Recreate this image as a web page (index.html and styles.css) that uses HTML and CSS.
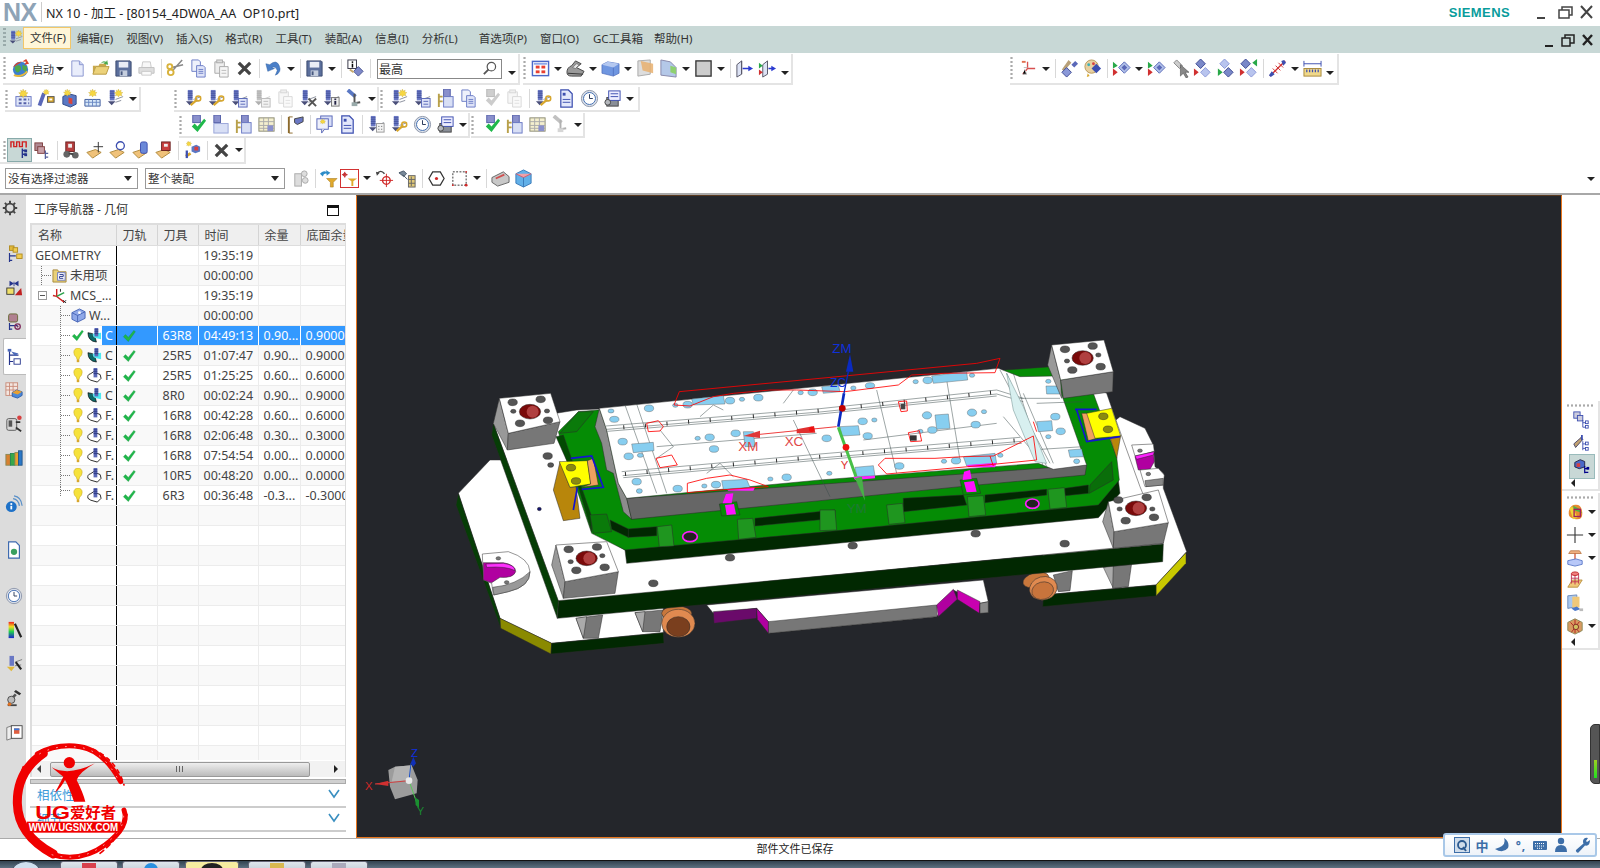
FILE: index.html
```html
<!DOCTYPE html>
<html lang="zh">
<head>
<meta charset="utf-8">
<title>NX 10 - 加工</title>
<link rel="stylesheet" href="styles.css">
</head>
<body>
<svg class="defs" width="0" height="0">
<symbol id="glo" viewBox="0 0 20 20"><circle cx="10" cy="11" r="8" fill="#3d7fd0"/><path d="M4 8q4-3 6 0t-2 6q-4 1-4-6zM12 6l5 2-1 6-4-3z" fill="#4fa84a"/><path d="M2 9Q6 1 16 3l-2 3 5-1-3-5z" fill="#d8452c"/><path d="M3 17q8 3 14-4" fill="none" stroke="#e6b93c" stroke-width="2"/></symbol>
<symbol id="doc" viewBox="0 0 20 20"><path d="M4 2h8l4 4v12H4z" fill="#e9edfb" stroke="#8a96d0"/><path d="M12 2v4h4" fill="#c9d1f0" stroke="#8a96d0"/></symbol>
<symbol id="fld" viewBox="0 0 20 20"><path d="M2 7h6l1-2h7v3H5L2 16z" fill="#c9a94a"/><path d="M2 16l3-8h14l-3 8z" fill="#ecd27a" stroke="#b99b42"/><path d="M10 5q2-4 6-2l1-2 1 5-5-1 2-1q-3-1-5 1z" fill="#4aa84a"/></symbol>
<symbol id="flp" viewBox="0 0 20 20"><path d="M2 2h15l1 1v15H2z" fill="#5b6f9c" stroke="#3d4c70"/><rect x="5" y="3" width="10" height="6" fill="#e8ecf5"/><rect x="6" y="12" width="8" height="6" fill="#c5cede"/><rect x="7" y="13" width="2" height="4" fill="#47587f"/></symbol>
<symbol id="prn" viewBox="0 0 20 20"><path d="M6 3h8l1 6H5z" fill="#eee" stroke="#888"/><path d="M2 9h16v6H2z" fill="#b4b8bd" stroke="#777"/><path d="M5 13h10v4H5z" fill="#f4f4f4" stroke="#888"/></symbol>
<symbol id="sci" viewBox="0 0 20 20"><path d="M17 1L7 12M18 6L6 9" stroke="#888" stroke-width="1.6"/><circle cx="5" cy="14" r="3" fill="none" stroke="#d8b23c" stroke-width="2"/><circle cx="4" cy="8" r="2.6" fill="none" stroke="#d8b23c" stroke-width="2"/></symbol>
<symbol id="cpy" viewBox="0 0 20 20"><path d="M3 1h7l2 2v10H3z" fill="#eef1fb" stroke="#6b7cc6"/><path d="M8 7h7l2 2v10H8z" fill="#dfe4f8" stroke="#6b7cc6"/><path d="M10 11h5M10 13h5M10 15h5" stroke="#6b7cc6"/></symbol>
<symbol id="pst" viewBox="0 0 20 20"><path d="M3 3h10v12H3z" fill="#eee" stroke="#aaa"/><rect x="5" y="1" width="6" height="3" fill="#ddd" stroke="#aaa"/><path d="M8 8h9v11H8z" fill="#f6f6f6" stroke="#aaa"/><path d="M10 12h5M10 15h5" stroke="#bbb"/></symbol>
<symbol id="del" viewBox="0 0 20 20"><path d="M4 4l12 12M16 4L4 16" stroke="#444" stroke-width="3.4"/></symbol>
<symbol id="und" viewBox="0 0 20 20"><path d="M2 5l2 8 7-3-3-1q4-2 6 3l-2 5q7-3 4-10T6 6z" fill="#4a7fc8" stroke="#2c5da0" stroke-width=".5"/></symbol>
<symbol id="inf" viewBox="0 0 20 20"><rect x="2" y="1" width="9" height="9" fill="#fff" stroke="#334"/><rect x="6" y="2.5" width="1.6" height="1.6"/><rect x="6" y="5" width="1.6" height="4"/><path d="M13 8l5 5-5 5-5-5z" fill="#7e88c8" stroke="#4a5590"/><path d="M4 11l4 3" stroke="#c6a86a" stroke-width="2"/></symbol>
<symbol id="bs" viewBox="0 0 20 20"><rect x="4" y="1" width="5" height="11" fill="#6a78c4"/><path d="M4 3h5M4 5h5M4 7h5M4 9h5" stroke="#3d4a94" stroke-width=".8"/><path d="M10 11l8-3M10 14l6-2" stroke="#8a8f9c"/><path d="M2 13h8l-4 4z" fill="#4a4f7a"/></symbol>
<symbol id="mk" viewBox="0 0 20 20"><use href="#bs"/><path d="M7 17l7-6" stroke="#d8a72c" stroke-width="2.4"/><circle cx="15" cy="10" r="2.6" fill="none" stroke="#d8a72c" stroke-width="1.6"/></symbol>
<symbol id="mc" viewBox="0 0 20 20"><use href="#bs"/><rect x="9" y="10" width="9" height="9" fill="#dfe4f8" stroke="#5a68b8"/><path d="M11 13h5M11 16h5" stroke="#5a68b8"/></symbol>
<symbol id="mx" viewBox="0 0 20 20"><use href="#bs"/><path d="M10 10l8 8M18 10l-8 8" stroke="#555" stroke-width="2"/></symbol>
<symbol id="mi" viewBox="0 0 20 20"><use href="#bs"/><rect x="10" y="9" width="8" height="9" fill="#eee" stroke="#777"/><rect x="13" y="10" width="2" height="1.5" fill="#224"/><rect x="13" y="12.5" width="2" height="4" fill="#224"/></symbol>
<symbol id="mt" viewBox="0 0 20 20"><path d="M3 1l8 7" stroke="#5a78c4" stroke-width="4"/><path d="M10 5v10l6-1" stroke="#555" stroke-width="2" fill="none"/><rect x="7" y="14" width="6" height="4" fill="#9aa"/></symbol>
<symbol id="sta" viewBox="0 0 20 20"><path d="M10 0l1.6 3.6L15 2l-1 3.6 4 .6-3 2.6 1.4 3.2-4-1L10 14l-1.6-3-4 1L6 8.800 3 6.200l4-.6L6 2l3.400 1.600z" fill="#f6d743" stroke="#b99b22" stroke-width=".5"/></symbol>
<symbol id="p1" viewBox="0 0 20 20"><rect x="2" y="8" width="16" height="10" fill="#dfe6f8" stroke="#6a78c4"/><path d="M5 11h3M10 11h3M15 11h1M5 15h3M10 15h3M15 15h1" stroke="#5560a8" stroke-width="2"/><use href="#sta" x="3" y="0" width="13" height="13"/></symbol>
<symbol id="p2" viewBox="0 0 20 20"><rect x="3" y="4" width="4" height="14" fill="#5a68b8" transform="rotate(20 5 11)"/><rect x="11" y="8" width="7" height="6" fill="#d8a72c" stroke="#555"/><rect x="13" y="10" width="3" height="2" fill="#fff"/><use href="#sta" x="5" y="0" width="9" height="9"/></symbol>
<symbol id="p3" viewBox="0 0 20 20"><path d="M3 8l6-3 8 2v9l-6 3-8-3z" fill="#5a78c4" stroke="#334c8c"/><path d="M9 9l4 1v6l-4-1z" fill="#d8453c"/><use href="#sta" x="2" y="0" width="11" height="11"/></symbol>
<symbol id="p4" viewBox="0 0 20 20"><path d="M2 11h16v7H2z" fill="#d8e8f8" stroke="#3d5a9c"/><path d="M2 14h16M6 11v7M10 11v7M14 11v7" stroke="#6a88c4"/><use href="#sta" x="4" y="0" width="12" height="12"/></symbol>
<symbol id="p5" viewBox="0 0 20 20"><use href="#bs"/><use href="#sta" x="7" y="0" width="12" height="12"/></symbol>
<symbol id="tck" viewBox="0 0 20 20"><path d="M2 11l3-3 4 4 8-10 2 2-10 14z" fill="#1fb84a" stroke="#0d8a30" stroke-width=".5"/></symbol>
<symbol id="ck" viewBox="0 0 20 20"><rect x="5" y="0" width="8" height="8" fill="#8a90cc" stroke="#5560a8"/><path d="M4 12l3-3 3 3 7-8 2 2-9 12z" fill="#1fb84a"/></symbol>
<symbol id="c2" viewBox="0 0 20 20"><rect x="3" y="0" width="7" height="8" fill="#8a90cc" stroke="#5560a8"/><rect x="3" y="9" width="15" height="10" fill="#d8dff5" stroke="#98a4d8"/></symbol>
<symbol id="c3" viewBox="0 0 20 20"><rect x="8" y="0" width="7" height="8" fill="#8a90cc" stroke="#5560a8"/><rect x="8" y="8" width="10" height="11" fill="#d8dff5" stroke="#6a78c4"/><path d="M3 5v14M3 8h4M3 13h4" stroke="#b8a04a" stroke-width="2"/></symbol>
<symbol id="tb" viewBox="0 0 20 20"><rect x="2" y="3" width="16" height="14" fill="#f4efcf" stroke="#8a8a70"/><path d="M2 7h16M2 11h16M2 14h16M7 3v14M12 3v14" stroke="#aaa"/><rect x="11" y="11" width="6" height="6" fill="#8a90cc"/></symbol>
<symbol id="flg" viewBox="0 0 20 20"><path d="M3 2v17" stroke="#8c6a2c" stroke-width="2"/><path d="M3 2h4M3 19h4" stroke="#8c6a2c"/><path d="M9 4l9-2v5l-6 3-3-2z" fill="#6a78c4" stroke="#444"/></symbol>
<symbol id="nte" viewBox="0 0 20 20"><rect x="6" y="1" width="12" height="11" fill="#d8def8" stroke="#5a68b8"/><rect x="2" y="4" width="12" height="11" fill="#eef0fb" stroke="#5a68b8"/><use href="#sta" x="4" y="4" width="8" height="8"/><path d="M7 15v4l3-4" fill="#eee" stroke="#5a68b8"/></symbol>
<symbol id="bdc" viewBox="0 0 20 20"><path d="M4 1h8l4 4v14H4z" fill="#e3e8fb" stroke="#3d4fb0" stroke-width="1.300"/><rect x="6" y="4" width="3" height="3" fill="#3d4fb0"/><path d="M6 11h8M6 14h8" stroke="#3d4fb0"/></symbol>
<symbol id="ml" viewBox="0 0 20 20"><use href="#bs"/><rect x="10" y="9" width="8" height="9" fill="#f3f3f3" stroke="#999"/><path d="M12 12h1M15 12h1M12 15h1M15 15h1" stroke="#555"/></symbol>
<symbol id="clk" viewBox="0 0 20 20"><circle cx="10" cy="10" r="8.500" fill="#dfe4ec" stroke="#8a93a8"/><circle cx="10" cy="10" r="6.300" fill="#fff" stroke="#3d6ab0"/><path d="M10 5.500V10h3.500" stroke="#235" fill="none"/></symbol>
<symbol id="mc2" viewBox="0 0 20 20"><rect x="4" y="9" width="12" height="9" fill="#8a8f98" stroke="#444"/><rect x="6" y="2" width="12" height="10" fill="#eef" stroke="#3d4fb0"/><path d="M8 5h8M8 8h8" stroke="#3d4fb0"/><circle cx="5" cy="14" r="3" fill="#b5b8bd" stroke="#444"/></symbol>
<symbol id="gr1" viewBox="0 0 20 20"><path d="M1 8V2h3v5h3V2h3v5h3V2h4v6" fill="none" stroke="#d02020" stroke-width="1.500"/><path d="M13 9v10M13 11h4M13 15h4" stroke="#24348c" stroke-width="1.500"/><rect x="15" y="10" width="3" height="3" fill="#24348c"/><rect x="15" y="14" width="3" height="3" fill="#24348c"/></symbol>
<symbol id="gr2" viewBox="0 0 20 20"><rect x="2" y="2" width="8" height="8" fill="#b08a94" stroke="#804040"/><rect x="5" y="6" width="7" height="7" fill="#c8a0a8" stroke="#804040"/><path d="M13 10v9M13 13h3M13 17h3" stroke="#55609c" stroke-width="1.300"/></symbol>
<symbol id="wrk" viewBox="0 0 20 20"><rect x="4" y="1" width="9" height="10" fill="#b84040" stroke="#6a2020"/><rect x="6.500" y="3" width="4" height="4" fill="#eee"/><circle cx="5" cy="14" r="3.500" fill="#666"/><circle cx="14" cy="15" r="3.500" fill="#666"/><path d="M7 13l5 1" stroke="#444" stroke-width="2"/></symbol>
<symbol id="e1" viewBox="0 0 20 20"><path d="M2 12l9-3 6 3-9 6z" fill="#f0c27a" stroke="#b08a3c"/><path d="M14 1v11M9 6h10" stroke="#333"/></symbol>
<symbol id="e2" viewBox="0 0 20 20"><path d="M2 12l9-3 6 3-9 6z" fill="#f0c27a" stroke="#b08a3c"/><circle cx="13" cy="5" r="4.200" fill="#fff" stroke="#3d4fb0" stroke-width="1.400"/></symbol>
<symbol id="e3" viewBox="0 0 20 20"><path d="M2 12l9-3 6 3-9 6z" fill="#f0c27a" stroke="#b08a3c"/><rect x="10" y="1" width="7" height="12" rx="2" fill="#6a88d8" stroke="#3d4fb0"/></symbol>
<symbol id="e4" viewBox="0 0 20 20"><path d="M2 12l9-3 6 3-9 6z" fill="#f0c27a" stroke="#b08a3c"/><rect x="8" y="1" width="9" height="9" fill="#c84040" stroke="#6a2020"/><rect x="10.500" y="3" width="4" height="3" fill="#eee"/></symbol>
<symbol id="lnk" viewBox="0 0 20 20"><path d="M3 16l5-3" stroke="#d8a72c" stroke-width="3"/><path d="M4 10v8" stroke="#3d4fb0" stroke-width="2.400"/><path d="M9 6l5-2 4 2v5l-5 2-4-2z" fill="#5a78c4"/><path d="M12 6h4v4h-4z" fill="#d84040"/><use href="#sta" x="2" y="0" width="8" height="8"/></symbol>
<symbol id="ftr" viewBox="0 0 20 20"><path d="M1 5q3-4 7-2L7 1l5 3-4 3V5Q5 4 4 8z" fill="#2c8cc8"/><path d="M8 10h11l-4 4v5h-3v-5z" fill="#e0a92c" stroke="#a87a1c" stroke-width=".6"/></symbol>
<symbol id="fbx" viewBox="0 0 20 20"><rect x=".5" y=".5" width="19" height="19" fill="#fff" stroke="#d02828"/><path d="M5 3v6M2 6h6" stroke="#c02020"/><circle cx="5" cy="6" r="1.600" fill="none" stroke="#c02020"/><path d="M8 10h10l-4 3v5h-2v-5z" fill="#e0a92c"/></symbol>
<symbol id="tgt" viewBox="0 0 20 20"><path d="M2 5q4-5 8 0" fill="none" stroke="#444" stroke-width="1.500"/><path d="M2 7l-1-4 4 1z" fill="#444"/><circle cx="12" cy="12" r="4" fill="none" stroke="#d02828" stroke-width="1.500"/><path d="M12 5v14M5 12h14" stroke="#d02828"/></symbol>
<symbol id="bin" viewBox="0 0 20 20"><path d="M1 4l5-2 3 3-3 3zM5 6l5 5" stroke="#456" fill="#789"/><rect x="11" y="7" width="7" height="12" fill="#e0c878" stroke="#666"/><path d="M14 8v10M11 11h7M11 15h7" stroke="#666"/></symbol>
<symbol id="hex" viewBox="0 0 20 20"><path d="M6 3h8l4 7-4 7H6l-4-7z" fill="#fff" stroke="#333" stroke-width="1.300"/><circle cx="10" cy="10" r="1.700" fill="#d02828"/></symbol>
<symbol id="rct" viewBox="0 0 20 20"><rect x="3" y="3" width="14" height="14" fill="none" stroke="#333" stroke-dasharray="2 1.500"/><circle cx="17" cy="17" r="1.500" fill="#d02828"/><circle cx="3" cy="17" r="1" fill="#d02828"/><circle cx="17" cy="3" r="1" fill="#d02828"/></symbol>
<symbol id="vw1" viewBox="0 0 20 20"><path d="M1 9l12-6 6 5v6L7 18l-6-4z" fill="#c8c8c8" stroke="#666"/><path d="M5 10l9-4" stroke="#d05050" stroke-width="2"/></symbol>
<symbol id="vw2" viewBox="0 0 20 20"><path d="M2 5l8-4 8 4v10l-8 4-8-4z" fill="#62b0e8" stroke="#3a7ab8"/><path d="M2 5l8 4 8-4" fill="#f0a0a8" stroke="#d06070"/><path d="M10 9v10" stroke="#3a7ab8"/></symbol>
<symbol id="asm" viewBox="0 0 20 20"><g fill="#ddd" stroke="#aaa"><rect x="4" y="5" width="7" height="13"/><circle cx="14" cy="5" r="3"/><circle cx="15" cy="12" r="3"/></g></symbol>
<symbol id="sh1" viewBox="0 0 20 20"><rect x="1.500" y="2.500" width="17" height="15" fill="#fff" stroke="#4a68c8" stroke-width="1.500"/><rect x="3" y="4" width="14" height="2" fill="#8ea6e8"/><g fill="#e84030"><rect x="5" y="7" width="4" height="3"/><rect x="11" y="7" width="4" height="3"/><rect x="5" y="12" width="4" height="3"/><rect x="11" y="12" width="4" height="3"/></g></symbol>
<symbol id="sh2" viewBox="0 0 20 20"><path d="M1 14q0-5 5-7l4-5 6 3-5 4 8 4-3 5H6q-5 0-5-4z" fill="#9a9a9a" stroke="#444"/><path d="M7 9l4-4 3 1-4 4z" fill="#e8e8e8" stroke="#555" stroke-width=".6"/><path d="M2 15l16 1" stroke="#333"/></symbol>
<symbol id="cub" viewBox="0 0 20 20"><path d="M1 6l6-3 12 2v10l-6 3-12-3z" fill="#6f96e0" stroke="#4a68b8" stroke-width=".7"/><path d="M1 6l12 3 6-4-12-2z" fill="#b4c8f0"/><path d="M13 9v9" stroke="#4a68b8" stroke-width=".7"/></symbol>
<symbol id="pg1" viewBox="0 0 20 20"><path d="M2 2l13-1v15L2 18z" fill="#ddd" stroke="#aaa"/><path d="M5 2l13 3v10L7 12z" fill="#e8b070" opacity=".85"/></symbol>
<symbol id="pg2" viewBox="0 0 20 20"><path d="M2 1l10 2 6 6v10l-16-2z" fill="#b4c8e8" stroke="#88a"/><path d="M12 7l6 2v7l-6-2z" fill="#8ed070"/></symbol>
<symbol id="sq" viewBox="0 0 20 20"><rect x="2" y="2" width="16" height="16" fill="#ccc" stroke="#333" stroke-width="1.400"/></symbol>
<symbol id="dr1" viewBox="0 0 20 20"><path d="M2 6l5-4v14l-5 3z" fill="#dde3f5" stroke="#556"/><path d="M7 2v14" stroke="#556"/><path d="M8 10h8" stroke="#2a3ad0" stroke-width="1.600"/><path d="M19 10l-5-3v6z" fill="#2a3ad0"/></symbol>
<symbol id="dr2" viewBox="0 0 20 20"><path d="M5 6l5-4v14l-5 3z" fill="#dde3f5" stroke="#556"/><path d="M1 4l4 3-4 3z" fill="#28a848"/><path d="M1 11l4 3-4 3z" fill="#d03030"/><path d="M11 10h5" stroke="#2a3ad0" stroke-width="1.600"/><path d="M19 10l-5-3v6z" fill="#2a3ad0"/></symbol>
<symbol id="ax" viewBox="0 0 20 20"><path d="M9 3v7l-5 6M9 10h8" stroke="#d85050" stroke-width="1.400" fill="none"/><path d="M5 9h4M4 16h4l-2-5" stroke="#bbb"/><rect x="3" y="2" width="4" height="2" fill="#e07050"/></symbol>
<symbol id="d1" viewBox="0 0 20 20"><path d="M9 1l3 3-8 9-2-2z" fill="#b8a078"/><path d="M16 2l3 3-4 4-3-3z" fill="#5a68b8"/><path d="M7 9l5 5-5 5-5-5z" fill="#8a98d8" stroke="#3d4a94"/></symbol>
<symbol id="d2" viewBox="0 0 20 20"><circle cx="9" cy="8" r="7" fill="#e8d0a0" stroke="#b89a5c"/><circle cx="6" cy="6" r="1.500" fill="#3cb0b8"/><circle cx="11" cy="5" r="1.500" fill="#d84040"/><path d="M14 5l5 5-5 5-5-5z" fill="#3d4fb0"/><path d="M5 15l-1 4 3-1" fill="#d8a72c"/></symbol>
<symbol id="d3" viewBox="0 0 20 20"><path d="M1 3v7l5-3z" fill="#28a848"/><path d="M1 10v8l5-4z" fill="#d03030"/><path d="M13 3l6 6-6 6-6-6z" fill="#b0c0e8" stroke="#5a68b8"/><path d="M13 6l3 3-3 3-3-3z" fill="#5a68b8"/></symbol>
<symbol id="d4" viewBox="0 0 20 20"><path d="M7 1l6 6-3 3-6-6z" fill="#ccc" stroke="#888"/><path d="M11 6v12l3-3 3 5 2-1-3-5h4z" fill="#888" stroke="#333" stroke-width=".5"/></symbol>
<symbol id="d5" viewBox="0 0 20 20"><path d="M8 0l5 5-5 5-5-5z" fill="#7a88c8" stroke="#3d4a94"/><path d="M13 9l5 5-5 5-5-5z" fill="#b8c4ee" stroke="#8a98d8"/><path d="M1 10v8l5-4z" fill="#d03030"/></symbol>
<symbol id="d6" viewBox="0 0 20 20"><path d="M9 0l5 5-5 5-5-5z" fill="#b8c4ee" stroke="#8a98d8"/><path d="M13 9l5 5-5 5-5-5z" fill="#7a88c8" stroke="#3d4a94"/><path d="M2 10v8l5-4z" fill="#28a848"/></symbol>
<symbol id="d7" viewBox="0 0 20 20"><path d="M7 0l5 5-5 5-5-5z" fill="#7a88c8" stroke="#3d4a94"/><path d="M13 9l5 5-5 5-5-5z" fill="#b8c4ee" stroke="#8a98d8"/><path d="M1 10v8l5-4z" fill="#d03030"/><path d="M19 0v8l-5-4z" fill="#28a848"/></symbol>
<symbol id="d8" viewBox="0 0 20 20"><path d="M2 18L18 2" stroke="#d03030" stroke-width="1.500"/><path d="M5 10l5 5M8 7l5 5M11 4l5 5" stroke="#d03030"/><path d="M4 13l3 3-4 3-2-2z" fill="#3d4fb0"/><path d="M14 2l3-1 2 3-3 3z" fill="#3d4fb0"/></symbol>
<symbol id="d9" viewBox="0 0 20 20"><path d="M1 5h18M1 2v6M19 2v6" stroke="#3d4fb0"/><rect x="1" y="10" width="18" height="8" fill="#f0d88a" stroke="#a88a3c"/><path d="M4 11v3M7 11v3M10 11v3M13 11v3M16 11v3" stroke="#3d4fb0" stroke-width="1.300"/></symbol>
<symbol id="st1" viewBox="0 0 20 20"><rect x="5" y="1" width="5" height="5" fill="#e0b83c" stroke="#b08a1c"/><rect x="9" y="3" width="5" height="5" fill="#f0cc50" stroke="#b08a1c"/><rect x="13" y="10" width="6" height="5" fill="#f0cc50" stroke="#b08a1c"/><path d="M5 9v10M5 12h7M5 17h3" stroke="#24348c" stroke-width="1.300"/></symbol>
<symbol id="st2" viewBox="0 0 20 20"><path d="M5 2l5 3 5-3v6l-5-3-5 3z" fill="#24348c"/><path d="M10 3v5" stroke="#24348c"/><rect x="2" y="10" width="8" height="7" fill="#f0e068" stroke="#333"/><path d="M11 18l7-8 1 8z" fill="#c02020"/></symbol>
<symbol id="st3" viewBox="0 0 20 20"><rect x="4" y="1" width="10" height="9" rx="2" fill="#b08090" stroke="#663"/><path d="M5 11v8M5 14h9M5 18h3" stroke="#24348c" stroke-width="1.300"/><circle cx="14" cy="15" r="3" fill="none" stroke="#803060" stroke-width="1.500"/><circle cx="14" cy="15" r="1" fill="#803060"/></symbol>
<symbol id="st4" viewBox="0 0 20 20"><rect x="3" y="1" width="4" height="3" fill="#4a68b8"/><path d="M5 4v15M5 8h10M5 15h4" stroke="#24348c" stroke-width="1.300"/><path d="M7 4l8 2-4 3z" fill="#4a68b8"/><rect x="10" y="12" width="7" height="6" fill="#fff" stroke="#24348c"/></symbol>
<symbol id="st5" viewBox="0 0 20 20"><rect x="1" y="2" width="13" height="14" fill="#f3e6e0" stroke="#c88a78"/><path d="M1 6h13M1 10h13M5 2v14M9 2v14" stroke="#c88a78"/><path d="M8 13l5-3 6 2v4l-5 3-6-2z" fill="#4a88d8" stroke="#2a5aa8"/><path d="M8 13l6 2 5-3-6-2z" fill="#e8a030"/></symbol>
<symbol id="st6" viewBox="0 0 20 20"><rect x="2" y="4" width="11" height="13" rx="2" fill="#d8d8d8" stroke="#555"/><rect x="4" y="6" width="4" height="7" fill="#555"/><path d="M12 8h5M12 14l6 4" stroke="#333" stroke-width="2"/><circle cx="16" cy="3" r="2.500" fill="#d84040"/></symbol>
<symbol id="st7" viewBox="0 0 20 20"><rect x="1" y="6" width="5" height="12" fill="#d88030" stroke="#885"/><rect x="6" y="5" width="5" height="13" fill="#38a848" stroke="#285"/><rect x="11" y="4" width="4" height="14" fill="#e8a030" stroke="#885"/><rect x="15" y="2" width="4" height="16" fill="#2a78c8" stroke="#258"/></symbol>
<symbol id="st8" viewBox="0 0 20 20"><circle cx="7" cy="13" r="6" fill="#1f72c8"/><rect x="6" y="9" width="2" height="2" fill="#fff"/><rect x="6" y="12" width="2" height="4" fill="#fff"/><path d="M9 4q6 1 7 8M10 1q8 1 9 11" fill="none" stroke="#5a90c8" stroke-width="1.400"/></symbol>
<symbol id="st9" viewBox="0 0 20 20"><path d="M4 1h8l4 4v14H4z" fill="#fff" stroke="#3d6ab0" stroke-width="1.300"/><circle cx="10" cy="12" r="3.500" fill="#3aa060"/></symbol>
<symbol id="st10" viewBox="0 0 20 20"><rect x="4" y="1" width="6" height="18" fill="url(#rb)"/><path d="M11 3l7 15" stroke="#222" stroke-width="2.400"/></symbol>
<linearGradient id="rb" x1="0" y1="0" x2="0" y2="1"><stop offset="0" stop-color="#f02020"/><stop offset=".3" stop-color="#f0e020"/><stop offset=".6" stop-color="#20d050"/><stop offset="1" stop-color="#2020d0"/></linearGradient>
<symbol id="st11" viewBox="0 0 20 20"><rect x="5" y="1" width="5" height="11" fill="#6a78c4"/><path d="M2 13h9l-4 5z" fill="#e0b83c"/><path d="M11 8l8-3M11 12l7-1" stroke="#777"/><path d="M12 8l6 8" stroke="#222" stroke-width="2.400"/></symbol>
<symbol id="st12" viewBox="0 0 20 20"><path d="M12 1l6 4-2 2-6-4z" fill="#333"/><path d="M12 6l-5 5" stroke="#555" stroke-width="3"/><circle cx="7" cy="12" r="4" fill="#bbb" stroke="#444"/><path d="M3 18h10" stroke="#444" stroke-width="2"/><circle cx="5" cy="17" r="2" fill="#e07020"/></symbol>
<symbol id="st13" viewBox="0 0 20 20"><path d="M2 5l6-2v14l-6 2z" fill="#eee" stroke="#777"/><rect x="7" y="3" width="12" height="14" fill="#fff" stroke="#444"/><rect x="10" y="6" width="6" height="6" fill="#e06040"/><rect x="10" y="6" width="6" height="2" fill="#3a78d8"/></symbol>
<symbol id="bt" viewBox="0 0 20 20"><rect x="2" y="1" width="7" height="7" fill="#ccd" stroke="#3d4fb0"/><rect x="6" y="5" width="6" height="6" fill="#ccd" stroke="#3d4fb0"/><path d="M12 10v8h4M12 13h4" stroke="#3d4fb0" fill="none"/><rect x="15" y="11" width="3" height="3" fill="#fff" stroke="#3d4fb0"/><rect x="15" y="16" width="3" height="3" fill="#fff" stroke="#3d4fb0"/></symbol>
<symbol id="bt2" viewBox="0 0 20 20"><path d="M2 11l8-7 2 2-8 9z" fill="#c0a070" stroke="#446"/><path d="M10 7V1h2v6z" fill="#3d4fb0"/><path d="M12 8v10M12 11h4M12 16h4" stroke="#3d4fb0" fill="none"/><rect x="15" y="9" width="3" height="3" fill="#fff" stroke="#3d4fb0"/><rect x="15" y="15" width="3" height="3" fill="#fff" stroke="#3d4fb0"/></symbol>
<symbol id="bt3" viewBox="0 0 20 20"><path d="M2 6l6-3 5 2v6l-6 2-5-2z" fill="#4a68c8" stroke="#224"/><path d="M4 7h4v4H4z" fill="#d84040"/><path d="M13 10v8M13 13h4M13 17h4" stroke="#00008c" fill="none" stroke-width="1.300"/><rect x="15" y="11" width="3" height="3" fill="#00008c"/></symbol>
<symbol id="rr1" viewBox="0 0 20 20"><path d="M3 12q0-9 7-10t8 8-7 8-8-6z" fill="#e88a30"/><path d="M8 3l6 3 4 5-9-3z" fill="#48b848"/><path d="M4 6l4 12 5-2L7 4z" fill="#f0d838"/><rect x="9" y="7" width="7" height="8" fill="none" stroke="#a02060" stroke-width="1.500"/></symbol>
<symbol id="rr2" viewBox="0 0 20 20"><path d="M10 1v18M1 10h18" stroke="#333" stroke-width="1.200"/></symbol>
<symbol id="rr3" viewBox="0 0 20 20"><path d="M5 2h10l2 3H3z" fill="#f0b080" stroke="#c08050"/><path d="M10 5v7" stroke="#d05030" stroke-width="1.400"/><path d="M2 13l9-2 7 2v4l-8 2-8-2z" fill="#b8c8f8" stroke="#5a78c8"/></symbol>
<symbol id="rr4" viewBox="0 0 20 20"><path d="M2 18l5-8h11l-5 8z" fill="#f0c878" stroke="#b89040"/><ellipse cx="10" cy="3" rx="4" ry="2" fill="#f08080" stroke="#c02020"/><path d="M6 3v11M14 3v11M10 5v10M6 8h8M6 12h8" stroke="#c03050"/></symbol>
<symbol id="rr5" viewBox="0 0 20 20"><path d="M2 2l10-1v13L2 16z" fill="#a8c8f0" stroke="#6a88b8"/><path d="M7 3h8v12H7z" fill="#f0c878"/><path d="M6 16l6-2 4 3-6 2z" fill="#4a78c8"/><rect x="15" y="16" width="4" height="3" fill="#bbb"/></symbol>
<symbol id="rr6" viewBox="0 0 20 20"><path d="M2 6l8-4 8 4v9l-8 4-8-4z" fill="#d89a60" stroke="#885"/><path d="M5 6l10 11M15 5L6 17M10 3v15" stroke="#b02020"/><circle cx="11" cy="11" r="3" fill="#d0c060" stroke="#802020"/></symbol>
<symbol id="bulb" viewBox="0 0 14 18"><path d="M7 0a5 5 0 0 1 5 5q0 4-3 6l-1 3H6l-1-3Q2 9 2 5a5 5 0 0 1 5-5z" fill="#f6e23c" stroke="#c8a820" stroke-width=".7"/><rect x="5.500" y="14" width="3" height="3" fill="#d8a72c"/></symbol>
<symbol id="cav" viewBox="0 0 16 16"><path d="M1 5q0 9 9 10l-1-4Q6 10 6 6z" fill="#0d6c6c" stroke="#000" stroke-width=".7"/><path d="M6 6q0 4 4 5l5 1V5z" fill="#4de8f0"/><rect x="8" y="0" width="4" height="9" fill="#5a68b8"/><path d="M8 2h4M8 4h4M8 6h4" stroke="#2c3680"/></symbol>
<symbol id="flc" viewBox="0 0 16 16"><path d="M1 11q-1-4 3-5l3-2 7 3 1 4-4 4-7-2z" fill="#fff" stroke="#222"/><rect x="7" y="0" width="4" height="10" fill="#5a68b8"/><path d="M7 2h4M7 4h4M7 6h4" stroke="#2c3680"/></symbol>
<symbol id="unu" viewBox="0 0 16 16"><path d="M1 2h5l1 2h8v11H1z" fill="#e8d078" stroke="#a88a3c"/><rect x="6" y="5" width="8" height="8" fill="#fff" stroke="#6a78c4"/><path d="M8 7h4v2H8v2h4" fill="none" stroke="#24348c"/></symbol>
<symbol id="mcs" viewBox="0 0 16 16"><path d="M5 9V1M5 9l-4-1M5 9l8 6" stroke="#d02020" stroke-width="1.500"/><path d="M5 9l8-4" stroke="#28a048" stroke-width="1.500"/><path d="M9 1v3M12 13l3 3M15 13l-3 3" stroke="#222"/></symbol>
<symbol id="wkp" viewBox="0 0 16 16"><path d="M1 5l8-4 6 3v7l-8 4-6-3z" fill="#8fa8e8" stroke="#4a68b8"/><path d="M1 5l6 3 8-4M7 8v7" fill="none" stroke="#4a68b8"/><circle cx="9" cy="5" r="1.500" fill="#fff"/></symbol>
</svg>

<header class="title">
  <span class="logo">NX</span>
  <span class="logo-sep"></span>
  <span class="title-text">NX 10 - 加工 - [80154_4DW0A_AA&nbsp;&nbsp;OP10.prt]</span>
  <span class="siemens">SIEMENS</span>
  <svg class="wc" viewBox="0 0 62 16"><path d="M0 14h8" stroke="#444" stroke-width="2"/><path d="M22 6h10v8H22zM25 6V3h10v8h-3" fill="none" stroke="#444" stroke-width="1.500"/><path d="M44 2l11 12M55 2L44 14" stroke="#444" stroke-width="2"/></svg>
</header>

<nav class="menu">
  <span class="grip-v"></span>
  <svg class="menu-ic"><use href="#p5"/></svg>
  <span class="mi on">文件(F)</span><span class="mi">编辑(E)</span><span class="mi">视图(V)</span><span class="mi">插入(S)</span><span class="mi">格式(R)</span><span class="mi">工具(T)</span><span class="mi">装配(A)</span><span class="mi n1">信息(I)</span><span class="mi n2">分析(L)</span><span class="mi">首选项(P)</span><span class="mi n3">窗口(O)</span><span class="mi n4">GC工具箱</span><span class="mi">帮助(H)</span>
  <svg class="wc2" viewBox="0 0 56 16"><path d="M2 14h8" stroke="#222" stroke-width="2"/><path d="M19 6h8v8h-8zM22 6V3h9v8h-4" fill="none" stroke="#222" stroke-width="1.500"/><path d="M40 3l9 10M49 3l-9 10" stroke="#222" stroke-width="2.400"/></svg>
</nav>

<section class="toolbars">
  <div class="row r1">
    <div class="bar b11"><span class="grip"></span>
      <svg class="i"><use href="#glo"/></svg><span class="lb">启动</span><span class="c"></span>
      <svg class="i"><use href="#doc"/></svg><svg class="i"><use href="#fld"/></svg><svg class="i"><use href="#flp"/></svg><svg class="i dim"><use href="#prn"/></svg><span class="s"></span>
      <svg class="i"><use href="#sci"/></svg><svg class="i"><use href="#cpy"/></svg><svg class="i"><use href="#pst"/></svg><svg class="i"><use href="#del"/></svg><span class="s"></span>
      <svg class="i"><use href="#und"/></svg><span class="c"></span><span class="s"></span>
      <svg class="i"><use href="#flp"/></svg><span class="c"></span><span class="s"></span>
      <svg class="i"><use href="#inf"/></svg><span class="s"></span>
      <label class="find"><span>最高</span><svg viewBox="0 0 16 16"><circle cx="10" cy="6" r="4.500" fill="#fff" stroke="#555" stroke-width="1.300"/><path d="M7 9l-5 5" stroke="#555" stroke-width="2"/></svg></label>
      <span class="c low"></span>
    </div>
    <div class="bar b12"><span class="grip"></span>
      <svg class="i"><use href="#sh1"/></svg><span class="c"></span>
      <svg class="i"><use href="#sh2"/></svg><span class="c"></span>
      <svg class="i"><use href="#cub"/></svg><span class="c"></span>
      <svg class="i"><use href="#pg1"/></svg><svg class="i"><use href="#pg2"/></svg><span class="c"></span>
      <svg class="i"><use href="#sq"/></svg><span class="c"></span><span class="s"></span>
      <svg class="i"><use href="#dr1"/></svg><svg class="i"><use href="#dr2"/></svg><span class="c low"></span>
    </div>
    <div class="bar b13"><span class="grip g7"></span>
      <svg class="i"><use href="#ax"/></svg><span class="c"></span><span class="s"></span>
      <svg class="i"><use href="#d1"/></svg><svg class="i"><use href="#d2"/></svg><span class="s"></span>
      <svg class="i"><use href="#d3"/></svg><span class="c"></span>
      <svg class="i"><use href="#d3"/></svg><svg class="i"><use href="#d4"/></svg><svg class="i"><use href="#d5"/></svg><svg class="i"><use href="#d6"/></svg><svg class="i"><use href="#d7"/></svg><span class="s"></span>
      <svg class="i"><use href="#d8"/></svg><span class="c"></span>
      <svg class="i"><use href="#d9"/></svg><span class="c low"></span>
    </div>
  </div>
  <div class="row r2">
    <div class="bar b21"><span class="grip g7"></span>
      <svg class="i"><use href="#p1"/></svg><svg class="i"><use href="#p2"/></svg><svg class="i"><use href="#p3"/></svg><svg class="i"><use href="#p4"/></svg><svg class="i"><use href="#p5"/></svg><span class="c"></span>
    </div>
    <div class="bar b22"><span class="grip g8"></span>
      <svg class="i"><use href="#mk"/></svg><svg class="i"><use href="#mk"/></svg><svg class="i"><use href="#mc"/></svg><svg class="i dim"><use href="#mc"/></svg><svg class="i dim"><use href="#pst"/></svg><svg class="i"><use href="#mx"/></svg><svg class="i"><use href="#mi"/></svg><svg class="i"><use href="#mt"/></svg><span class="c"></span>
    </div>
    <div class="bar b23"><span class="grip g8"></span>
      <svg class="i"><use href="#p5"/></svg><svg class="i"><use href="#mc"/></svg><svg class="i"><use href="#c3"/></svg><svg class="i"><use href="#cpy"/></svg><svg class="i dim"><use href="#ck"/></svg><svg class="i dim"><use href="#pst"/></svg><span class="s"></span>
      <svg class="i"><use href="#mk"/></svg><svg class="i"><use href="#bdc"/></svg><svg class="i"><use href="#clk"/></svg><svg class="i"><use href="#mc2"/></svg><span class="c"></span>
    </div>
  </div>
  <div class="row r3">
    <div class="bar b31"><span class="grip g7"></span>
      <svg class="i"><use href="#ck"/></svg><svg class="i"><use href="#c2"/></svg><svg class="i"><use href="#c3"/></svg><svg class="i"><use href="#tb"/></svg><span class="s"></span>
      <svg class="i"><use href="#flg"/></svg><span class="s"></span>
      <svg class="i"><use href="#nte"/></svg><svg class="i"><use href="#bdc"/></svg><span class="s"></span>
      <svg class="i"><use href="#ml"/></svg><svg class="i"><use href="#mk"/></svg><svg class="i"><use href="#clk"/></svg><svg class="i"><use href="#mc2"/></svg><span class="c"></span>
    </div>
    <div class="bar b32"><span class="grip g9"></span>
      <svg class="i"><use href="#ck"/></svg><svg class="i"><use href="#c3"/></svg><svg class="i"><use href="#tb"/></svg><svg class="i dim"><use href="#mt"/></svg><span class="c"></span>
    </div>
  </div>
  <div class="row r4">
    <div class="bar b41"><span class="grip g5"></span>
      <span class="active"><svg class="i"><use href="#gr1"/></svg></span><svg class="i"><use href="#gr2"/></svg><span class="s"></span>
      <svg class="i"><use href="#wrk"/></svg><svg class="i"><use href="#e1"/></svg><svg class="i"><use href="#e2"/></svg><svg class="i"><use href="#e3"/></svg><svg class="i"><use href="#e4"/></svg><span class="s"></span>
      <svg class="i"><use href="#lnk"/></svg><span class="s"></span>
      <svg class="i"><use href="#del"/></svg><span class="c"></span>
    </div>
  </div>
  <div class="row r5">
    <div class="sel w1"><span>没有选择过滤器</span><i></i></div>
    <div class="sel w2"><span>整个装配</span><i></i></div>
    <svg class="i ml4"><use href="#asm"/></svg><span class="s"></span>
    <svg class="i n20"><use href="#ftr"/></svg><svg class="i"><use href="#fbx"/></svg><span class="c"></span>
    <svg class="i"><use href="#tgt"/></svg><svg class="i"><use href="#bin"/></svg><span class="s"></span>
    <svg class="i"><use href="#hex"/></svg><svg class="i"><use href="#rct"/></svg><span class="c"></span><span class="s"></span>
    <svg class="i"><use href="#vw1"/></svg><svg class="i"><use href="#vw2"/></svg>
    <span class="c far"></span>
  </div>
</section>

<main class="main">
  <aside class="strip">
    <svg class="gear" viewBox="0 0 20 20"><circle cx="10" cy="10" r="5.500" fill="none" stroke="#444" stroke-width="2.400"/><path d="M10 1v3M10 16v3M1 10h3M16 10h3M3.600 3.600l2.100 2.100M14.300 14.300l2.100 2.100M3.600 16.400l2.100-2.100M14.300 5.700l2.100-2.100" stroke="#444" stroke-width="2.400"/></svg>
    <span class="st g1"><svg><use href="#st1"/></svg></span>
    <span class="st"><svg><use href="#st2"/></svg></span>
    <span class="st"><svg><use href="#st3"/></svg></span>
    <span class="st act"><svg><use href="#st4"/></svg></span>
    <span class="st"><svg><use href="#st5"/></svg></span>
    <span class="st"><svg><use href="#st6"/></svg></span>
    <span class="st"><svg><use href="#st7"/></svg></span>
    <span class="st lg"><svg><use href="#st8"/></svg></span>
    <span class="st lg"><svg><use href="#st9"/></svg></span>
    <span class="st lg"><svg><use href="#clk"/></svg></span>
    <span class="st"><svg><use href="#st10"/></svg></span>
    <span class="st"><svg><use href="#st11"/></svg></span>
    <span class="st"><svg><use href="#st12"/></svg></span>
    <span class="st"><svg><use href="#st13"/></svg></span>
  </aside>

  <section class="nav">
    <div class="nav-head"><span>工序导航器 - 几何</span><i class="max"></i></div>
    <div class="frame">
      <div class="tbl">
        <table>
          <colgroup><col class="c1"><col class="c2"><col class="c2"><col class="c3"><col class="c4"><col class="c5"></colgroup>
          <thead><tr><th>名称</th><th>刀轨</th><th>刀具</th><th>时间</th><th>余量</th><th>底面余量</th></tr></thead>
          <tbody>
            <tr><td class="n"><div class="t"><span class="geo">GEOMETRY</span></div></td><td></td><td></td><td>19:35:19</td><td></td><td></td></tr>
            <tr><td class="n"><div class="t"><i class="tl l0"></i><svg class="ti"><use href="#unu"/></svg><span class="nm">未用项</span></div></td><td></td><td></td><td>00:00:00</td><td></td><td></td></tr>
            <tr><td class="n"><div class="t"><i class="tl l0 half"></i><b class="mn"></b><svg class="ti"><use href="#mcs"/></svg><span class="nm">MCS_...</span></div></td><td></td><td></td><td>19:35:19</td><td></td><td></td></tr>
            <tr><td class="n"><div class="t"><i class="tl l1"></i><svg class="ti"><use href="#wkp"/></svg><span class="nm">W...</span></div></td><td></td><td></td><td>00:00:00</td><td></td><td></td></tr>
            <tr class="selrow"><td class="n"><div class="t"><i class="tl l1"></i><svg class="ck"><use href="#tck"/></svg><svg class="ti op"><use href="#cav"/></svg><span class="nm last">C</span></div></td><td><svg class="ck2"><use href="#tck"/></svg></td><td>63R8</td><td>04:49:13</td><td>0.90...</td><td>0.9000</td></tr>
            <tr><td class="n"><div class="t"><i class="tl l1"></i><svg class="bl"><use href="#bulb"/></svg><svg class="ti op"><use href="#cav"/></svg><span class="nm last">C</span></div></td><td><svg class="ck2"><use href="#tck"/></svg></td><td>25R5</td><td>01:07:47</td><td>0.90...</td><td>0.9000</td></tr>
            <tr><td class="n"><div class="t"><i class="tl l1"></i><svg class="bl"><use href="#bulb"/></svg><svg class="ti op"><use href="#flc"/></svg><span class="nm last">F.</span></div></td><td><svg class="ck2"><use href="#tck"/></svg></td><td>25R5</td><td>01:25:25</td><td>0.60...</td><td>0.6000</td></tr>
            <tr><td class="n"><div class="t"><i class="tl l1"></i><svg class="bl"><use href="#bulb"/></svg><svg class="ti op"><use href="#cav"/></svg><span class="nm last">C</span></div></td><td><svg class="ck2"><use href="#tck"/></svg></td><td>8R0</td><td>00:02:24</td><td>0.90...</td><td>0.9000</td></tr>
            <tr><td class="n"><div class="t"><i class="tl l1"></i><svg class="bl"><use href="#bulb"/></svg><svg class="ti op"><use href="#flc"/></svg><span class="nm last">F.</span></div></td><td><svg class="ck2"><use href="#tck"/></svg></td><td>16R8</td><td>00:42:28</td><td>0.60...</td><td>0.6000</td></tr>
            <tr><td class="n"><div class="t"><i class="tl l1"></i><svg class="bl"><use href="#bulb"/></svg><svg class="ti op"><use href="#flc"/></svg><span class="nm last">F.</span></div></td><td><svg class="ck2"><use href="#tck"/></svg></td><td>16R8</td><td>02:06:48</td><td>0.30...</td><td>0.3000</td></tr>
            <tr><td class="n"><div class="t"><i class="tl l1"></i><svg class="bl"><use href="#bulb"/></svg><svg class="ti op"><use href="#flc"/></svg><span class="nm last">F.</span></div></td><td><svg class="ck2"><use href="#tck"/></svg></td><td>16R8</td><td>07:54:54</td><td>0.00...</td><td>0.0000</td></tr>
            <tr><td class="n"><div class="t"><i class="tl l1"></i><svg class="bl"><use href="#bulb"/></svg><svg class="ti op"><use href="#flc"/></svg><span class="nm last">F.</span></div></td><td><svg class="ck2"><use href="#tck"/></svg></td><td>10R5</td><td>00:48:20</td><td>0.00...</td><td>0.0000</td></tr>
            <tr><td class="n"><div class="t"><i class="tl l1 half"></i><svg class="bl"><use href="#bulb"/></svg><svg class="ti op"><use href="#flc"/></svg><span class="nm last">F.</span></div></td><td><svg class="ck2"><use href="#tck"/></svg></td><td>6R3</td><td>00:36:48</td><td>-0.3...</td><td>-0.3000</td></tr>
            <tr><td class="n"></td><td></td><td></td><td></td><td></td><td></td></tr><tr><td class="n"></td><td></td><td></td><td></td><td></td><td></td></tr><tr><td class="n"></td><td></td><td></td><td></td><td></td><td></td></tr><tr><td class="n"></td><td></td><td></td><td></td><td></td><td></td></tr><tr><td class="n"></td><td></td><td></td><td></td><td></td><td></td></tr><tr><td class="n"></td><td></td><td></td><td></td><td></td><td></td></tr><tr><td class="n"></td><td></td><td></td><td></td><td></td><td></td></tr><tr><td class="n"></td><td></td><td></td><td></td><td></td><td></td></tr><tr><td class="n"></td><td></td><td></td><td></td><td></td><td></td></tr><tr><td class="n"></td><td></td><td></td><td></td><td></td><td></td></tr><tr><td class="n"></td><td></td><td></td><td></td><td></td><td></td></tr><tr><td class="n"></td><td></td><td></td><td></td><td></td><td></td></tr><tr><td class="n"></td><td></td><td></td><td></td><td></td><td></td></tr>
          </tbody>
        </table>
      </div>
      <div class="hs"><i class="al"></i><span class="th"><b></b></span><i class="ar"></i></div>
    </div>
    <div class="split"></div>
    <div class="sec"><span>相依性</span><svg viewBox="0 0 12 10"><path d="M1 1l5 7 5-7" fill="none" stroke="#3a8fc0" stroke-width="1.600"/></svg></div>
    <div class="sec"><span>细节</span><svg viewBox="0 0 12 10"><path d="M1 1l5 7 5-7" fill="none" stroke="#3a8fc0" stroke-width="1.600"/></svg></div>
  </section>

  <section class="gfx">
    <svg class="scene" viewBox="357 196 1204 641" preserveAspectRatio="none">
      <g transform="translate(450 330) scale(.33333)" stroke="#2a2a2a" stroke-width="1.500">
        <polygon points="120,390 25,490 150,865 305,940 640,908 640,600 300,390" fill="#fff"/>
        <polygon points="25,490 18,525 152,895 150,865" fill="#063d06"/>
        <polygon points="150,865 305,940 303,972 152,895" fill="#8a8a00"/>
        <polygon points="305,940 640,908 642,940 303,972" fill="#012801"/>
        <g transform="translate(1110 0)">
          <polygon points="900,260 975,295 1000,345 1005,410 1030,430 1030,475 1100,665 1008,765 668,795 668,500 850,300" fill="#fff"/>
          <polygon points="1098,668 1098,700 1008,798 1008,765" fill="#c8c800"/>
          <polygon points="670,795 1008,765 1008,798 668,830" fill="#012801"/>
          <polygon points="850,712 880,775 905,772 880,705" fill="#aaa"/>
          <polygon points="880,705 935,700 925,770 878,775" fill="#777"/>
          <polygon points="700,735 715,785 750,782 757,722" fill="#777"/>
          <ellipse cx="648" cy="750" rx="40" ry="22" fill="#c8773c" transform="rotate(-15 648 750)"/>
          <ellipse cx="670" cy="775" rx="42" ry="35" fill="#e08a50" transform="rotate(-15 670 775)"/>
          <ellipse cx="668" cy="782" rx="33" ry="26" fill="#c8743c" transform="rotate(-15 668 782)"/>
          <polygon points="935,345 1000,342 1003,365 945,378" fill="#fff"/>
          <polygon points="945,380 1000,365 1003,395 990,418 955,420" fill="#b000a0"/>
          <polygon points="945,378 1003,365 1000,375 950,388" fill="#ff20ff"/>
          <polygon points="960,420 1015,415 1033,435 1030,465 975,470" fill="#fff"/>
          <polygon points="975,452 1030,445 1030,465 978,470" fill="#888"/>
          <ellipse cx="960" cy="362" rx="7" ry="5" fill="#777"/><ellipse cx="985" cy="432" rx="7" ry="5" fill="#777"/>
          <polygon points="-340,825 -320,850 -190,835 -155,875 -155,910 350,860 400,780 480,820 505,815 490,750" fill="#fff"/>
          <polygon points="-155,875 350,825 350,860 -155,910" fill="#777"/>
          <polygon points="-320,845 -190,835 -190,865 -318,880" fill="#6a0a6a"/>
          <polygon points="-190,835 -155,875 -155,910 -188,868" fill="#b000a0"/>
          <polygon points="350,825 400,778 412,808 355,860" fill="#b000a0"/>
          <polygon points="412,780 480,815 478,850 412,808" fill="#c800b0"/>
          <polygon points="480,820 505,815 505,848 480,850" fill="#888"/>
        </g>
        <polygon points="378,865 400,925 445,925 458,855" fill="#777"/>
        <polygon points="378,865 400,925 410,860" fill="#aaa"/>
        <polygon points="555,848 578,905 630,905 640,840" fill="#777"/>
        <polygon points="555,848 578,905 585,845" fill="#aaa"/>
        <ellipse cx="680" cy="850" rx="45" ry="22" fill="#c8773c"/>
        <ellipse cx="685" cy="880" rx="50" ry="42" fill="#e08a50"/>
        <ellipse cx="685" cy="890" rx="35" ry="30" fill="#7a3f1e"/>
        <polygon points="130,280 380,240 1930,170 1970,190 2005,290 2070,470 2140,640 325,815" fill="#fff"/>
        <polygon points="325,812 2140,642 2138,695 322,865" fill="#012801"/>
        <polygon points="130,280 125,315 322,865 325,812" fill="#063d06"/>
        <ellipse cx="293" cy="378" rx="14" ry="10" fill="#555"/><ellipse cx="302" cy="405" rx="9" ry="7" fill="#555"/><ellipse cx="268" cy="537" rx="6" ry="5" fill="#141470"/>
        <ellipse cx="840" cy="683" rx="14" ry="10" fill="#555"/><ellipse cx="610" cy="760" rx="14" ry="10" fill="#555"/><ellipse cx="1577" cy="611" rx="14" ry="10" fill="#555"/><ellipse cx="1208" cy="647" rx="14" ry="10" fill="#555"/><ellipse cx="1844" cy="641" rx="14" ry="10" fill="#555"/>
        <path d="M97 672L175 665Q238 685 240 725Q240 770 175 785L130 795L125 760L100 750Z" fill="#fff"/>
        <path d="M128 772Q200 765 240 725Q240 770 175 785L132 795Z" fill="#999"/>
        <path d="M100 698L160 698Q197 705 197 725Q190 745 150 742L125 758L100 750Z" fill="#b000a0"/>
        <path d="M108 702L160 700Q195 705 195 722Q170 708 110 712Z" fill="#ff30ff"/>
        <ellipse cx="145" cy="685" rx="7" ry="5" fill="#777"/><ellipse cx="170" cy="757" rx="7" ry="5" fill="#777"/>
        <polygon points="430,605 525,660 530,700 1110,645 1945,563 2010,490 2005,450" fill="#012801"/>
        <polygon points="442,240 385,245 325,305 340,360 425,610 525,660 1110,607 1945,525 2008,450 2000,380 1930,190 1905,165 1805,110 1665,120" fill="#058c05"/>
        <polygon points="385,245 430,245 380,305 330,310" fill="#0a7a0a"/>
        <polygon points="318,320 340,315 425,560 425,605 385,470" fill="#024a02"/>
        <polygon points="480,570 535,597 535,622 485,598" fill="#012801"/>
        <polygon points="535,597 620,590 620,617 535,622" fill="#012801"/>
        <polygon points="915,565 1155,540 1155,565 915,588" fill="#012801"/>
        <polygon points="1360,505 1540,495 1550,525 1360,545" fill="#012801"/>
        <polygon points="1605,495 1790,478 1790,495 1605,518" fill="#012801"/>
        <polygon points="1845,475 1915,465 1915,490 1845,497" fill="#012801"/>
        <polygon points="622,590 665,585 672,648 628,650" fill="#1f961f"/>
        <polygon points="862,568 908,565 918,622 866,628" fill="#1f961f"/>
        <polygon points="1110,540 1155,540 1160,600 1110,602" fill="#1f961f"/>
        <polygon points="1310,525 1358,520 1365,578 1317,583" fill="#1f961f"/>
        <polygon points="1552,500 1600,497 1607,555 1557,560" fill="#1f961f"/>
        <polygon points="1794,478 1843,473 1850,532 1800,537" fill="#1f961f"/>
        <polygon points="420,555 470,552 485,605 430,610" fill="#0a7a0a"/>
        <polygon points="1920,465 1985,395 1990,450 1918,490" fill="#0a6e0a"/>
        <ellipse cx="720" cy="620" rx="22" ry="15" fill="#222" stroke="#ff20ff" stroke-width="5"/>
        <ellipse cx="1747" cy="521" rx="20" ry="14" fill="#222" stroke="#ff20ff" stroke-width="5"/>
        <polygon points="330,395 310,480 340,572 390,565 378,470 360,472" fill="#b8860b"/>
        <polygon points="328,395 412,392 422,462 360,472" fill="#ffff00"/>
        <polygon points="412,392 430,385 445,465 395,472 422,462" fill="#f0a060"/>
        <path d="M362 385L425 378L460 472L395 478M382 472L370 540" fill="none" stroke="#1414d0" stroke-width="5"/>
        <ellipse cx="363" cy="413" rx="14" ry="10" fill="#8a8a10"/><ellipse cx="378" cy="453" rx="14" ry="10" fill="#8a8a10"/>
        <g transform="translate(1110 0)">
          <polygon points="880,320 902,318 890,385 870,322" fill="#b8860b"/>
          <polygon points="785,250 810,250 830,325 805,332" fill="#f0a060"/>
          <polygon points="800,250 875,235 902,318 825,325" fill="#ffff00"/>
          <path d="M765 238L830 238M770 240L800 335L900 320" fill="none" stroke="#1414d0" stroke-width="5"/>
          <ellipse cx="850" cy="259" rx="14" ry="10" fill="#8a8a10"/><ellipse cx="864" cy="298" rx="14" ry="10" fill="#8a8a10"/>
        </g>
        <polygon points="448,235 435,290 455,340 470,420 490,430 520,545 545,568 530,505 505,460 470,300" fill="#8c8c8c"/>
        <polygon points="530,505 1910,405 1905,435 1530,470 1110,512 545,568" fill="#666"/>
        <polygon points="448,235 1645,115 1710,140 1815,138 1910,405 1810,418 1765,400 1110,450 530,505 505,460 470,300" fill="#fff"/>
        <g fill="none" stroke="#3a4a4a" stroke-width="1.500">
          <path d="M468 288L1110 236L1640 180L1720 205"/><path d="M470 298L1110 246L1640 192L1720 215"/><path d="M472 304L1110 252L1640 198"/>
          <path d="M515 425L1110 372L1710 322"/><path d="M518 437L1110 384L1715 334"/><path d="M520 443L1110 390L1715 340"/>
          <path d="M525 225L620 490M560 222L650 490M1000 220L1030 180M630 300L670 350L620 385M1030 270L1140 500M1280 180L1340 430M1490 150L1530 390M1650 120L1800 400M1670 130L1790 410M1690 130L1780 410M1760 220L1900 215M620 350L1100 310M1240 330L1640 280M1740 360L1900 350M1720 190L1810 400M1700 205L1830 205M1660 260L1770 390M750 260L790 225L820 240M770 430L810 400L850 440"/>
        </g>
        <path d="M520 292L1110 242L1640 186" fill="none" stroke="#2a2a2a" stroke-width="12" stroke-dasharray="3 62"/>
        <path d="M525 432L1110 380L1710 330" fill="none" stroke="#2a2a2a" stroke-width="12" stroke-dasharray="3 62"/>
        <g fill="#87cef0" stroke="#555" stroke-width="1.200">
          <polygon points="545,342 610,337 612,362 550,368"/><polygon points="725,207 820,197 825,222 730,225"/><polygon points="815,452 890,448 900,472 820,478"/><polygon points="880,305 910,305 915,350 885,350"/><polygon points="1445,138 1550,125 1553,150 1450,160"/><polygon points="1115,170 1165,165 1170,185 1120,190"/><polygon points="1170,290 1225,287 1230,315 1175,318"/><polygon points="1215,412 1270,407 1275,437 1220,440"/><polygon points="1455,255 1495,252 1500,295 1460,298"/><polygon points="1540,380 1635,370 1640,400 1550,408"/><polygon points="1760,275 1805,272 1808,302 1765,305"/><polygon points="1788,168 1830,168 1832,192 1790,192"/><polygon points="1855,360 1895,357 1900,380 1860,382"/>
          <ellipse cx="483" cy="243" rx="9" ry="6"/><ellipse cx="493" cy="268" rx="14" ry="9"/><ellipse cx="597" cy="235" rx="14" ry="10"/><ellipse cx="518" cy="335" rx="14" ry="10"/><ellipse cx="536" cy="379" rx="14" ry="10"/><ellipse cx="571" cy="376" rx="9" ry="6"/><ellipse cx="560" cy="455" rx="14" ry="10"/><ellipse cx="568" cy="483" rx="9" ry="7"/><ellipse cx="683" cy="476" rx="14" ry="10"/><ellipse cx="743" cy="325" rx="8" ry="6"/><ellipse cx="779" cy="322" rx="14" ry="10"/><ellipse cx="792" cy="357" rx="14" ry="10"/><ellipse cx="857" cy="310" rx="14" ry="10"/><ellipse cx="763" cy="468" rx="8" ry="6"/><ellipse cx="798" cy="464" rx="14" ry="10"/><ellipse cx="961" cy="447" rx="8" ry="6"/><ellipse cx="1010" cy="442" rx="14" ry="10"/><ellipse cx="925" cy="203" rx="14" ry="10"/><ellipse cx="876" cy="208" rx="8" ry="6"/><ellipse cx="840" cy="212" rx="14" ry="10"/><ellipse cx="713" cy="224" rx="14" ry="10"/><ellipse cx="676" cy="226" rx="8" ry="6"/><ellipse cx="1052" cy="188" rx="8" ry="6"/><ellipse cx="1088" cy="187" rx="14" ry="10"/><ellipse cx="1260" cy="167" rx="14" ry="9"/><ellipse cx="1210" cy="174" rx="8" ry="6"/><ellipse cx="1433" cy="151" rx="14" ry="10"/><ellipse cx="1397" cy="155" rx="8" ry="6"/><ellipse cx="1566" cy="136" rx="8" ry="6"/><ellipse cx="1238" cy="274" rx="14" ry="10"/><ellipse cx="1273" cy="270" rx="8" ry="6"/><ellipse cx="1130" cy="325" rx="14" ry="10"/><ellipse cx="1253" cy="318" rx="14" ry="10"/><ellipse cx="1431" cy="256" rx="14" ry="11"/><ellipse cx="1447" cy="300" rx="14" ry="10"/><ellipse cx="1411" cy="304" rx="8" ry="6"/><ellipse cx="1566" cy="248" rx="14" ry="11"/><ellipse cx="1602" cy="245" rx="8" ry="6"/><ellipse cx="1577" cy="284" rx="14" ry="10"/><ellipse cx="1138" cy="430" rx="8" ry="6"/><ellipse cx="1348" cy="408" rx="14" ry="10"/><ellipse cx="1482" cy="394" rx="8" ry="6"/><ellipse cx="1518" cy="392" rx="14" ry="10"/><ellipse cx="1651" cy="376" rx="8" ry="6"/><ellipse cx="1816" cy="260" rx="14" ry="10"/><ellipse cx="1832" cy="304" rx="14" ry="10"/><ellipse cx="1795" cy="154" rx="8" ry="6"/><ellipse cx="1880" cy="394" rx="9" ry="7"/><ellipse cx="1795" cy="320" rx="8" ry="6"/>
        </g>
        <polygon points="1670,130 1720,230 1790,400 1755,395 1690,240" fill="#d8f0f0" stroke="#6a8a8a"/>
        <g fill="#ff20ff" stroke="none">
          <polygon points="1210,440 1275,437 1275,445 1215,450"/><polygon points="1550,405 1640,398 1635,412 1555,412"/><polygon points="830,478 915,472 910,482 835,482"/>
        </g>
        <polygon points="808,522 860,515 870,555 815,558" fill="#058c05"/>
        <polygon points="818,520 828,492 850,490 845,520" fill="#ff10ff" stroke="none"/>
        <polygon points="825,525 852,522 858,553 830,555" fill="#ff10ff" stroke="none"/>
        <polygon points="1530,450 1580,445 1592,490 1540,495" fill="#058c05"/>
        <polygon points="1538,450 1542,425 1560,420 1565,447" fill="#ff10ff" stroke="none"/>
        <polygon points="1542,457 1572,453 1580,485 1550,487" fill="#ff10ff" stroke="none"/>
        <g>
          <polygon points="148,205 130,280 172,360 175,310" fill="#999"/>
          <polygon points="175,310 330,275 312,340 172,360" fill="#777"/>
          <polygon points="148,205 302,190 330,275 175,310" fill="#fff"/>
          <g fill="#555"><ellipse cx="188" cy="217" rx="14" ry="10"/><ellipse cx="272" cy="208" rx="14" ry="10"/><ellipse cx="210" cy="280" rx="14" ry="10"/><ellipse cx="294" cy="271" rx="14" ry="10"/><ellipse cx="190" cy="244" rx="8" ry="6"/><ellipse cx="291" cy="243" rx="8" ry="6"/></g>
          <ellipse cx="240" cy="245" rx="32" ry="22" fill="#7a0a0a"/><ellipse cx="248" cy="245" rx="18" ry="18" fill="#b04040" stroke="none"/>
        </g>
        <g>
          <polygon points="318,645 305,705 340,805 345,755" fill="#999"/>
          <polygon points="345,755 505,725 495,790 340,805" fill="#777"/>
          <polygon points="318,645 470,635 505,725 345,755" fill="#fff"/>
          <g fill="#555"><ellipse cx="356" cy="658" rx="14" ry="10"/><ellipse cx="441" cy="651" rx="14" ry="10"/><ellipse cx="379" cy="721" rx="14" ry="10"/><ellipse cx="464" cy="712" rx="14" ry="10"/><ellipse cx="362" cy="695" rx="8" ry="6"/><ellipse cx="457" cy="677" rx="8" ry="6"/></g>
          <ellipse cx="410" cy="685" rx="32" ry="22" fill="#7a0a0a"/><ellipse cx="418" cy="685" rx="18" ry="18" fill="#b04040" stroke="none"/>
        </g>
        <g transform="translate(1110 0)">
          <polygon points="695,45 683,105 725,205 722,150" fill="#999"/>
          <polygon points="722,150 880,125 878,185 730,205" fill="#777"/>
          <polygon points="695,45 852,30 880,125 722,150" fill="#fff"/>
          <g fill="#555"><ellipse cx="735" cy="58" rx="14" ry="10"/><ellipse cx="818" cy="48" rx="14" ry="10"/><ellipse cx="757" cy="120" rx="14" ry="10"/><ellipse cx="842" cy="110" rx="14" ry="10"/><ellipse cx="741" cy="93" rx="8" ry="6"/><ellipse cx="835" cy="75" rx="8" ry="6"/></g>
          <ellipse cx="788" cy="84" rx="32" ry="22" fill="#7a0a0a"/><ellipse cx="796" cy="84" rx="18" ry="18" fill="#b04040" stroke="none"/>
          <polygon points="865,515 848,575 880,655 882,605" fill="#999"/>
          <polygon points="882,605 1045,578 1030,640 880,655" fill="#777"/>
          <polygon points="865,515 1015,480 1045,578 882,605" fill="#fff"/>
          <g fill="#555"><ellipse cx="895" cy="510" rx="14" ry="10"/><ellipse cx="980" cy="502" rx="14" ry="10"/><ellipse cx="917" cy="572" rx="14" ry="10"/><ellipse cx="1002" cy="562" rx="14" ry="10"/><ellipse cx="899" cy="537" rx="8" ry="6"/><ellipse cx="997" cy="537" rx="8" ry="6"/></g>
          <ellipse cx="948" cy="535" rx="32" ry="22" fill="#7a0a0a"/><ellipse cx="956" cy="535" rx="18" ry="18" fill="#b04040" stroke="none"/>
        </g>
        <g fill="none" stroke="#ff0000" stroke-width="2.500">
          <polygon points="672,225 688,185 1110,145 1580,100 1650,85 1635,128 1480,130 1385,135 1345,165 1185,185 1040,180 960,180 850,190 790,200 720,228"/>
          <polygon points="712,460 770,445 840,435 900,450 955,470 810,480 712,488"/>
          <polygon points="590,280 625,272 640,290 630,303 595,305"/>
          <polygon points="618,385 665,375 682,405 630,413"/>
          <polygon points="1285,405 1305,385 1410,385 1455,385 1540,380 1630,378 1750,318 1760,390 1610,405 1310,432"/>
          <polygon points="1345,215 1370,213 1372,243 1353,245"/>
          <polygon points="1375,308 1408,302 1415,333 1382,335"/>
          <path d="M1750 275L1760 305M1620 378L1630 408"/>
        </g>
        <rect x="1380" y="316" width="20" height="16" fill="#333" stroke="none"/>
        <rect x="1352" y="222" width="14" height="16" fill="#444" stroke="none"/>
        <g stroke="none">
          <path d="M1165 290L1182 190" stroke="#0a2ac0" stroke-width="8"/>
          <path d="M1182 190L1195 125" stroke="#0a2ac0" stroke-width="4"/>
          <polygon points="1200,72 1210,125 1188,125" fill="#0a2ac0"/>
          <path d="M1165 292L1218 440" stroke="#48c048" stroke-width="9"/>
          <polygon points="1245,512 1215,445 1236,440" fill="#48b048"/>
          <path d="M1160 290L1060 300L900 316" stroke="#f04040" stroke-width="3"/>
          <polygon points="880,318 930,302 930,324" fill="#e03838"/>
          <polygon points="1040,298 1092,288 1096,308 1040,310" fill="#e03030"/>
          <circle cx="1177" cy="235" r="10" fill="#c00000"/>
          <circle cx="1188" cy="352" r="10" fill="#f01010"/>
          <circle cx="1085" cy="298" r="8" fill="#f01010"/>
        </g>
        <g font-family="Liberation Sans, sans-serif" font-size="40" stroke="none">
          <text x="1147" y="70" fill="#1030d8">ZM</text>
          <text x="1140" y="170" fill="#1030d8" font-size="36">ZC</text>
          <text x="865" y="362" fill="#e04848">XM</text>
          <text x="1004" y="349" fill="#e04848">XC</text>
          <text x="1172" y="418" fill="#e03030" font-size="34">Y</text>
          <text x="1190" y="548" fill="#1f7a34">YM</text>
        </g>
      </g>
      <g transform="translate(355 740) scale(.33333)" font-family="Liberation Sans, sans-serif">
        <polygon points="100,90 120,80 170,76 188,120 185,160 120,178 105,140" fill="#9c9c9c"/>
        <polygon points="120,80 170,76 165,120 110,125" fill="#b4b4b4"/>
        <path d="M162 122L60 132" stroke="#d04040" stroke-width="3"/><polygon points="60,132 100,122 100,138" fill="#d03030"/>
        <path d="M162 122L168 70" stroke="#1a50c8" stroke-width="3"/><polygon points="175,50 183,70 175,80 167,70" fill="#1030b8"/>
        <path d="M162 122L186 190" stroke="#58c858" stroke-width="3"/><polygon points="180,172 192,180 192,205 182,195" fill="#1a9030"/>
        <circle cx="162" cy="122" r="10" fill="#e8e8e8"/>
        <text x="168" y="50" font-size="34" fill="#1030e0">Z</text>
        <text x="30" y="150" font-size="34" fill="#d02828">X</text>
        <text x="186" y="226" font-size="32" fill="#1a8a30">Y</text>
      </g>
    </svg>
  </section>

  <aside class="rside">
    <div class="rbar">
      <span class="grip-h"></span>
      <svg class="ri"><use href="#bt"/></svg>
      <svg class="ri"><use href="#bt2"/></svg>
      <span class="ract"><svg class="ri"><use href="#bt3"/></svg></span>
      <span class="ra"></span>
    </div>
    <div class="rbar">
      <span class="grip-h"></span>
      <span class="rl"><svg class="ri"><use href="#rr1"/></svg><span class="c"></span></span>
      <span class="rl"><svg class="ri"><use href="#rr2"/></svg><span class="c"></span></span>
      <span class="rl"><svg class="ri"><use href="#rr3"/></svg><span class="c"></span></span>
      <span class="rl"><svg class="ri"><use href="#rr4"/></svg></span>
      <span class="rl"><svg class="ri"><use href="#rr5"/></svg></span>
      <span class="rl"><svg class="ri"><use href="#rr6"/></svg><span class="c"></span></span>
      <span class="ra"></span>
    </div>
    <div class="meter"><i></i></div>
  </aside>
</main>

<footer class="status">部件文件已保存</footer>
<div class="taskbar">
  <i class="orb"></i><b class="tk"><em class="ti1"></em></b><b class="tk"><em class="ti2"></em></b><b class="tk cur"><em class="ti3"></em></b><b class="tk"><em class="ti4"></em></b><b class="tk"><em class="ti5"></em></b>
</div>

<div class="ime">
  <svg viewBox="0 0 16 16"><rect x=".5" y=".5" width="15" height="15" fill="#cfdcea" stroke="#3d6ea8"/><circle cx="8" cy="8" r="4" fill="none" stroke="#2c5a90" stroke-width="1.800"/><path d="M9 10l3 4" stroke="#2c5a90" stroke-width="1.800"/></svg>
  <span class="zh">中</span>
  <svg viewBox="0 0 16 16"><path d="M10 1q3 8-9 11 8 5 13-1 2-6-4-10z" fill="#3d6ea8"/></svg>
  <span class="pn">°,</span>
  <svg viewBox="0 0 16 16"><rect x="1" y="4" width="14" height="9" rx="1" fill="#3d6ea8"/><path d="M3 6.500h10M3 9h10M5 11.300h6" stroke="#fff" stroke-dasharray="1 1"/></svg>
  <svg viewBox="0 0 16 16"><circle cx="8" cy="4" r="3.200" fill="#3d6ea8"/><path d="M2 15q0-7 6-7t6 7z" fill="#3d6ea8"/></svg>
  <svg viewBox="0 0 16 16"><path d="M15 3l-3 2-1-1 2-3q-4-1-5 3 0 2 .5 2.500L1 13q-.5 1 .5 2t2 .5L10 8.500q5 1 5-5.500z" fill="#3d6ea8"/></svg>
</div>

<svg class="stamp" viewBox="0 0 420 414">
  <g fill="none" stroke="#f00000" stroke-linecap="round">
    <path d="M130 70Q50 125 52 220T160 372" stroke-width="27"/>
    <path d="M112 72Q170 40 240 50T362 155" stroke-width="15"/>
    <path d="M150 372Q240 400 315 345T372 240" stroke-width="15"/>
    <path d="M70 110Q30 210 80 310" stroke-width="5" stroke-dasharray="12 10"/>
    <path d="M280 58Q350 90 372 165" stroke-width="5" stroke-dasharray="10 14"/>
    <path d="M300 370Q365 320 382 250" stroke-width="5" stroke-dasharray="14 12"/>
  </g>
  <g fill="none" stroke="#fff" stroke-width="2" stroke-dasharray="5 22">
    <path d="M118 72Q170 42 240 52T358 155"/>
    <path d="M155 374Q240 398 312 345T368 242"/>
  </g>
  <circle cx="208" cy="98" r="17" fill="#f00000"/>
  <path d="M155 112Q205 140 285 100Q240 125 230 150Q250 190 256 215H222Q205 165 195 150Q182 175 165 188L190 140Q170 125 155 112Z" fill="#f00000"/>
  <text class="st-ug" x="106" y="266" textLength="104" lengthAdjust="spacingAndGlyphs">UG</text>
  <text class="st-zh" x="210" y="263">爱好者</text>
  <rect x="80" y="275" width="282" height="33" fill="#f00000"/>
  <text class="st-www" x="86" y="302" textLength="268" lengthAdjust="spacingAndGlyphs">WWW.UGSNX.COM</text>
</svg>
</body>
</html>
```

FILE: styles.css
```css
*{box-sizing:border-box}
html,body{margin:0;padding:0}
body{width:1600px;height:868px;overflow:hidden;background:#fff;position:relative;display:flex;flex-direction:column;font:12px "Noto Sans","Noto Sans CJK SC",sans-serif;color:#333}
.defs{position:absolute}
svg{display:block;flex:none}

/* title */
.title{height:26px;flex:none;display:flex;align-items:center;background:#fff;padding-bottom:2px}
.logo{font:bold 25px "Liberation Sans",sans-serif;color:#8ea3b6;margin-left:3px;width:37px;letter-spacing:-.5px}
.logo-sep{width:1px;height:20px;background:#ccc;margin:0 4px 0 1px}
.title-text{font-size:12.500px;color:#222;white-space:pre}
.siemens{margin-left:auto;font:bold 13px "Liberation Sans",sans-serif;color:#089c9c;letter-spacing:.4px}
.wc{width:62px;height:16px;margin:0 1px 0 27px}

/* menu */
.menu{height:27px;flex:none;display:flex;align-items:center;background:#c8d8d6;padding:0 0 4px 3px}
.grip-v{width:3px;height:20px;background:repeating-linear-gradient(#9aa 0 2px,transparent 2px 4px)}
.menu-ic{width:16px;height:16px;margin:0 -1px 0 2px}
.mi{font-size:11.500px;color:#333;margin-right:13px;white-space:nowrap}
.mi.on{background:#fff6d8;border:1px solid #f3c768;height:22px;line-height:20px;padding:0 6px;margin-right:6px;width:48px;white-space:nowrap;overflow:hidden}
.mi.n1{margin-right:13px}
.mi.n2{margin-right:21px}
.mi.n3{margin-right:14px}
.mi.n4{margin-right:11px}
.wc2{width:56px;height:16px;margin:4px 1px 0 auto}

/* toolbars */
.toolbars{height:142px;flex:none;display:flex;flex-direction:column;background:#fff;border-bottom:2px solid #a8a8a8}
.row{display:flex;align-items:stretch;flex:none}
.r1{height:31px;margin-top:1px}
.r2{height:25px;margin-top:2px}
.r3{height:25px;margin-top:1px}
.r4{height:26px}
.r5{height:22px;margin-top:3px;align-items:center;position:relative}
.bar{display:flex;align-items:center;background:#fff;border-right:2px solid #e4e4e4;border-bottom:2px solid #e4e4e4}
.b11{margin-left:3px;width:517px}
.b12{margin-left:3px;width:270px}
.b13{margin-left:auto;margin-right:261px;width:329px}
.b21{margin-left:5px;width:136px}
.b22{margin-left:33px;width:205px}
.b23{margin-left:1px;width:260px}
.b31{margin-left:179px;width:291px}
.b32{margin-left:1px;width:114px}
.b41{width:246px}
.grip{width:6px;height:calc(100% - 4px);flex:none;background:radial-gradient(circle,#aaa 1px,transparent 1.300px) 0 0/3px 4px repeat-y}
.g5{width:5px;margin-left:3px}
.g7{width:7px}
.g8{width:8px}
.g9{width:9px}
.i{width:19px;height:19px;margin:0 2px;flex:none}
.n20{margin:0 .5px}
.ml4{margin-left:6px}
.dim{opacity:.45;filter:grayscale(1)}
.s{width:6px;height:19px;flex:none;background:linear-gradient(#d8d8d8,#d8d8d8) center/1px 100% no-repeat}
.c{width:12px;height:12px;flex:none;position:relative}
.c::after{content:"";position:absolute;left:2px;top:4px;border:4px solid transparent;border-top:4px solid #222;border-bottom:0}
.c.low{margin-top:9px}
.lb{width:22px;font-size:11px;white-space:nowrap;flex:none}
.find{display:flex;align-items:center;justify-content:space-between;width:125px;height:20px;margin-left:4px;margin-right:4px;border:1px solid #888;padding:0 4px 0 1px;font-size:12px;flex:none}
.find svg{width:15px;height:15px}
.active{display:block;background:#c8d8d6;outline:1px solid #8aa;height:22px;padding-top:1px;flex:none}
.sel{display:flex;align-items:center;justify-content:space-between;height:21px;border:1px solid #999;padding:0 5px 0 2px;font-size:11.500px;flex:none;background:#fff}
.sel i{border:4px solid transparent;border-top:5px solid #222;border-bottom:0}
.w1{width:133px;margin-left:5px;margin-right:7px}
.w2{width:140px}
.far{position:absolute;left:1585px;top:6px}

/* main */
.main{height:643px;flex:none;display:flex}
.strip{width:26px;flex:none;background:#dcdcdc;display:flex;flex-direction:column;align-items:flex-end}
.gear{width:16px;height:16px;margin:5px 8px 0 0}
.st{width:23px;height:34px;display:flex;align-items:center;justify-content:center;flex:none;padding-right:2px}
.st svg{width:18px;height:18px}
.st.g1{margin-top:21px}
.st.act{background:#fff;border:1px solid #bbb;border-right:0;height:37px;margin:-1px 0 -2px;border-radius:2px 0 0 2px}
.st.lg{margin-top:12px}
.nav{width:330px;flex:none;background:#fff;display:flex;flex-direction:column;padding-left:4px}
.nav-head{height:29px;flex:none;display:flex;align-items:center;justify-content:space-between;padding:0 17px 2px 4px;font-size:12px;color:#333}
.max{width:12px;height:11px;border:1px solid #111;border-top-width:3px;margin-top:3px}
.frame{width:316px;border:2px solid #ddd;border-right-width:1px;border-bottom:0;display:flex;flex-direction:column;margin-top:-1px}
.tbl{height:535px;overflow:hidden;background:#fff}
table{border-collapse:collapse;table-layout:fixed;width:313px}
col.c1{width:84px}
col.c2{width:41px}
col.c3{width:60px}
col.c4{width:42px}
col.c5{width:45px}
th{height:20px;padding:0 0 0 6px;background:#efefef;border-right:1px solid #d4d4d4;border-bottom:1px solid #ddd;font-weight:400;text-align:left;color:#444;white-space:nowrap;overflow:hidden;font-size:12px}
td{height:20px;padding:0 0 0 5px;border-bottom:1px solid #ececec;border-right:1px solid #ececec;white-space:nowrap;overflow:hidden;color:#444;font-size:12.500px;line-height:19px}
td.n{padding:0;border-right:1px solid #000}
tbody tr:nth-child(even){background:#f9f9f9}
.t{display:flex;align-items:center;height:19px}
.geo{margin-left:3px}
.tl{display:block;height:20px;width:10px;margin-left:28px;flex:none;border-left:1px dotted #777;background:repeating-linear-gradient(90deg,#777 0 1px,transparent 1px 2px) 0 50%/100% 1px no-repeat}
.tl.l0{margin-left:9px;width:10px}
.tl.half{height:10px;align-self:flex-start}
.tl.l0.half{width:0;border:0;background:none;margin-left:6px}
.mn{width:9px;height:9px;border:1px solid #999;background:linear-gradient(#555,#555) center/5px 1px no-repeat #fff;flex:none;margin-right:4px}
.ti{width:15px;height:15px;margin-left:1px;flex:none}
.ti.op{margin-left:3px}
.nm{margin-left:3px;overflow:hidden}
.ck{width:13px;height:13px;margin-left:1px;flex:none}
.bl{width:12px;height:15px;margin-left:2px;flex:none}
.ck2{width:14px;height:14px;margin-top:1px}
.nm.last{margin-left:0;padding-left:3px;flex:1;align-self:stretch;line-height:19px}
.selrow td{background:#3399ff;color:#fff;border-right-color:#fff}
.selrow td.n{background:#fff;border-right-color:#000}
.selrow .nm{background:#3399ff;color:#fff}
.hs{height:16px;flex:none;display:flex;align-items:center;background:#f2f2f2;margin-top:1px}
.hs .al{margin-left:5px;border:4px solid transparent;border-right:4px solid #444;border-left:0}
.th{width:260px;height:15px;margin-left:9px;border:1px solid #999;border-radius:2px;background:linear-gradient(#eee,#bbb);display:flex;justify-content:center;align-items:center}
.th b{width:8px;height:6px;background:repeating-linear-gradient(90deg,#666 0 1px,transparent 1px 3px)}
.hs .ar{margin-left:24px;border:4px solid transparent;border-left:4px solid #222;border-right:0}
.split{width:316px;height:5px;flex:none;background:#d0d0d0;border:1px solid #aaa;margin-top:2px}
.sec{width:316px;height:24px;flex:none;display:flex;align-items:center;justify-content:space-between;padding:0 6px 2px 7px;border-bottom:2px solid #ccc;color:#3a9ad9;font-size:12.500px}
.sec svg{width:12px;height:10px}
.gfx{width:1206px;flex:none;border:1px solid #e8761e;border-top-color:#5a3a20;background:#24262b}
.scene{width:1204px;height:641px}
.rside{width:38px;flex:none;background:#fff;padding-top:206px;display:flex;flex-direction:column}
.rbar{width:38px;border-right:2px solid #e4e4e4;border-bottom:2px solid #e4e4e4;margin-bottom:2px;display:flex;flex-direction:column}
.grip-h{height:6px;margin:2px 4px 0;background:radial-gradient(circle,#aaa 1px,transparent 1.300px) 0 0/4px 5px repeat-x;flex:none}
.ri{width:18px;height:18px;margin:2px 0 2px 7px}
.ract{width:24px;height:23px;background:#c8d8d6;outline:1px solid #9bb;margin-left:8px;display:block;flex:none}
.rbar:first-child .ri{margin:2px 0 3px 10px}
.rbar:first-child .ract .ri{margin:2px 0 0 3px}
.ra{width:0;height:0;margin:1px 0 2px 9px;border:4px solid transparent;border-right:4px solid #222;border-left:0;flex:none}
.rl{display:flex;align-items:center;height:22.700px;padding-left:4px;flex:none}
.rl .ri{margin:0 2px 0 0}
.meter{width:10px;height:60px;margin:72px 0 0 auto;background:#555;border-radius:5px 0 0 5px;border:1px solid #333;position:relative;display:flex;align-items:flex-end;padding:0 0 5px 3px;flex:none}
.meter i{display:block;width:3px;height:18px;background:linear-gradient(#9ed020,#20e020)}

/* status + taskbar */
.status{height:22px;flex:none;background:#fff;border-top:1px solid #aaa;text-align:center;line-height:20px;font-size:11px;color:#222;padding-right:10px}
.taskbar{height:8px;flex:none;background:linear-gradient(#31424f,#5c7080);display:flex;border-top:1px solid #111;overflow:hidden;align-items:flex-start}
.orb{width:28px;height:20px;margin-left:12px;border-radius:50%;background:#cfe0ee;border:1px solid #456;margin-right:20px;flex:none}
.tk{width:58px;height:20px;margin-right:4px;background:linear-gradient(#dfe6ec,#aab8c4);border:1px solid #667;border-radius:3px;display:flex;justify-content:center;flex:none}
.tk.cur{background:#f6eca0;width:54px;margin-left:1px;margin-right:9px}
.tk em{display:block;width:14px;height:14px;margin-top:1px}
.ti1{background:#d8404c}
.ti2{background:#2a90e0;border-radius:50%}
.ti3{background:#222;width:22px!important;border-radius:50%}
.ti4{background:#d8b850}
.ti5{background:#aab}

/* overlays */
.ime{position:absolute;left:1443px;top:833px;width:154px;height:24px;background:linear-gradient(#fff,#eef3f9);border:2px solid #a9c8e8;border-radius:3px;display:flex;align-items:center;justify-content:space-between;padding:0 4px 0 9px}
.ime svg{width:16px;height:16px}
.zh{font:bold 13px "Noto Sans CJK SC",sans-serif;color:#3d6ea8}
.pn{font-size:12px;font-weight:700;color:#3d6ea8;letter-spacing:1px}
.stamp{position:absolute;left:0;top:730px;width:140px;height:138px}
.st-ug{font:bold 54px "Liberation Sans",sans-serif;fill:#f00000}
.st-zh{font:bold 46px "Noto Sans CJK SC",sans-serif;fill:#f00000}
.st-www{font:bold 30px "Liberation Sans",sans-serif;fill:#fff}
```
